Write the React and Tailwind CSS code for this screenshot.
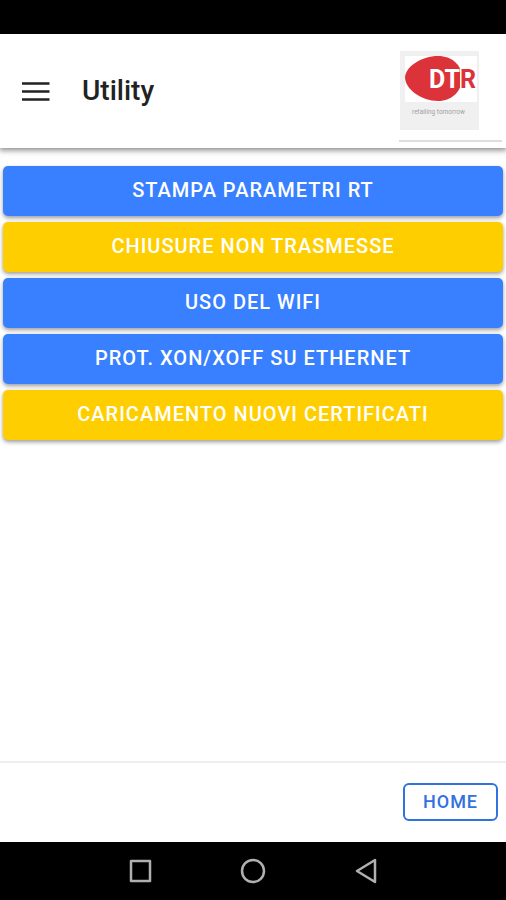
const actions = [
  { label: 'STAMPA PARAMETRI RT', tone: 'bg-[#3880ff]' },
  { label: 'CHIUSURE NON TRASMESSE', tone: 'bg-[#ffce00]' },
  { label: 'USO DEL WIFI', tone: 'bg-[#3880ff]' },
  { label: 'PROT. XON/XOFF SU ETHERNET', tone: 'bg-[#3880ff]' },
  { label: 'CARICAMENTO NUOVI CERTIFICATI', tone: 'bg-[#ffce00]' },
];

function Logo() {
  return (
    <svg className="h-[79px] w-[79px]" viewBox="0 0 79 79" role="img" aria-label="DTR retailing tomorrow">
      <rect width="79" height="79" fill="#f0f0f0" />
      <rect x="5" y="5" width="72" height="46" fill="#fff" />
      <path d="M5 26C6 15 22 5 38 5c14 0 24 9 24 22 0 13-10 23-24 23C21 50 5 38 5 26Z" fill="#dc323a" />
      <path d="M60 17h6v21h-6Z" fill="#fff" />
      <text x="29" y="37" fill="#fff" fontFamily="Roboto, 'Liberation Sans', sans-serif" fontWeight="700" fontSize="25">
        DT<tspan fill="#dc323a">R</tspan>
      </text>
      <text x="12" y="63" fill="#a0a0a0" fontSize="6.5" fontFamily="Roboto, sans-serif">retailing tomorrow</text>
    </svg>
  );
}

function NavIcon({ children }) {
  return (
    <svg className="size-7" viewBox="0 0 28 28" fill="none" stroke="#b0b0b0" strokeWidth="2.5" strokeLinejoin="round" aria-hidden="true">
      {children}
    </svg>
  );
}

export default function App() {
  return (
    <div className="flex min-h-screen flex-col bg-white font-[Roboto,'Liberation_Sans',sans-serif]">
      <div className="h-[34px] bg-black" />

      <header className="z-10 flex h-[114px] items-center bg-white pl-5 pr-1 shadow-[0_1px_6px_1px_rgba(0,0,0,0.5)]">
        <button type="button" aria-label="Menu" className="flex h-10 w-8 items-center">
          <svg className="h-8 w-8" viewBox="0 0 32 32" stroke="#222" strokeWidth="2.5" aria-hidden="true">
            <path d="M2 8.500H29.500M2 16.500H29.500M2 24.500H29.500" />
          </svg>
        </button>
        <h1 className="ml-[30px] text-[28px] font-medium leading-8 text-[#222]">Utility</h1>
        <div className="ml-auto mb-[6px] w-[103px] self-end border-b-2 border-[#dedede] pb-[10px] pl-px">
          <Logo />
        </div>
      </header>

      <main className="flex flex-1 flex-col gap-[6px] px-[3px] pt-[18px]">
        {actions.map(({ label, tone }) => (
          <button
            key={label}
            type="button"
            className={`h-[50px] w-full rounded-[5px] pb-[2px] text-xl font-medium tracking-[1px] text-white shadow-[0_2px_4px_rgba(0,0,0,0.4)] ${tone}`}
          >
            {label}
          </button>
        ))}
      </main>

      <footer className="flex h-[81px] items-center justify-end border-t-2 border-[#eeeeee] pb-[2px] pr-2">
        <button
          type="button"
          className="h-[38px] w-[95px] rounded-[6px] border-2 border-[#3171e0] text-lg font-medium tracking-[1px] text-[#3171e0]"
        >
          HOME
        </button>
      </footer>

      <nav className="flex h-[58px] items-center justify-center gap-[85px] bg-black" aria-label="Sistema">
        <button type="button" aria-label="Recenti">
          <NavIcon><rect x="5" y="4" width="19" height="20" /></NavIcon>
        </button>
        <button type="button" aria-label="Home">
          <NavIcon><circle cx="14" cy="14" r="11" /></NavIcon>
        </button>
        <button type="button" aria-label="Indietro">
          <NavIcon><path d="M5 14 23 3V25Z" /></NavIcon>
        </button>
      </nav>
    </div>
  );
}
